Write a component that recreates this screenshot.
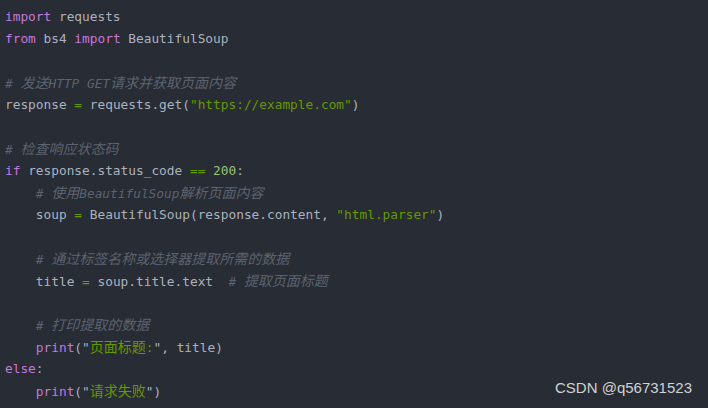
type Tok = [string, string];

const color: Record<string, string> = {
  kw: "text-[#c678dd]",
  t: "text-[#abb2bf]",
  s: "text-[#669900]",
  o: "text-[#669900]",
  n: "text-[#98c379]",
  p: "text-[#abb2bf]",
  c: "text-[#5c6370] italic",
};

const lines: Tok[][] = [
  [["kw", "import"], ["t", " requests"]],
  [["kw", "from"], ["t", " bs4 "], ["kw", "import"], ["t", " BeautifulSoup"]],
  [],
  [["c", "# 发送HTTP GET请求并获取页面内容"]],
  [["t", "response "], ["o", "="], ["t", " requests.get"], ["p", "("], ["s", '"https://example.com"'], ["p", ")"]],
  [],
  [["c", "# 检查响应状态码"]],
  [["kw", "if"], ["t", " response.status_code "], ["o", "=="], ["t", " "], ["n", "200"], ["p", ":"]],
  [["t", "    "], ["c", "# 使用BeautifulSoup解析页面内容"]],
  [["t", "    soup "], ["o", "="], ["t", " BeautifulSoup"], ["p", "("], ["t", "response.content"], ["p", ", "], ["s", '"html.parser"'], ["p", ")"]],
  [],
  [["t", "    "], ["c", "# 通过标签名称或选择器提取所需的数据"]],
  [["t", "    title "], ["o", "="], ["t", " soup.title.text  "], ["c", "# 提取页面标题"]],
  [],
  [["t", "    "], ["c", "# 打印提取的数据"]],
  [["t", "    "], ["kw", "print"], ["p", "("], ["p", '"'], ["s", "页面标题:"], ["p", '"'], ["p", ", "], ["t", "title"], ["p", ")"]],
  [["kw", "else"], ["p", ":"]],
  [["t", "    "], ["kw", "print"], ["p", "("], ["p", '"'], ["s", "请求失败"], ["p", '"'], ["p", ")"]],
];

function runs(text: string) {
  return text.split(/([\u3000-\u9fff\uff00-\uffef]+)/).filter(Boolean);
}

function Token({ kind, text }: { kind: string; text: string }) {
  return (
    <span className={color[kind]}>
      {runs(text).map((r, i) =>
        /[\u3000-\u9fff\uff00-\uffef]/.test(r) ? (
          <span key={i} className="text-[14px]">
            {r}
          </span>
        ) : (
          <span key={i}>{r}</span>
        )
      )}
    </span>
  );
}

export default function App() {
  return (
    <div className="relative w-[708px] h-[408px] overflow-hidden bg-[#282c34]">
      <pre
        className="pt-[6px] pl-[5px] text-[12.8px] leading-[22px] whitespace-pre"
        style={{ fontFamily: '"DejaVu Sans Mono", "Noto Sans CJK SC", monospace' }}
      >
        {lines.map((line, i) => (
          <div key={i} className="h-[22px]">
            {line.map(([k, t], j) => (
              <Token key={j} kind={k} text={t} />
            ))}
          </div>
        ))}
      </pre>
      <div
        className="absolute right-[16px] bottom-[9px] text-[15px] text-[#cfd2d6]"
        style={{ fontFamily: '"Liberation Sans", Arial, sans-serif' }}
      >
        CSDN @q56731523
      </div>
    </div>
  );
}
